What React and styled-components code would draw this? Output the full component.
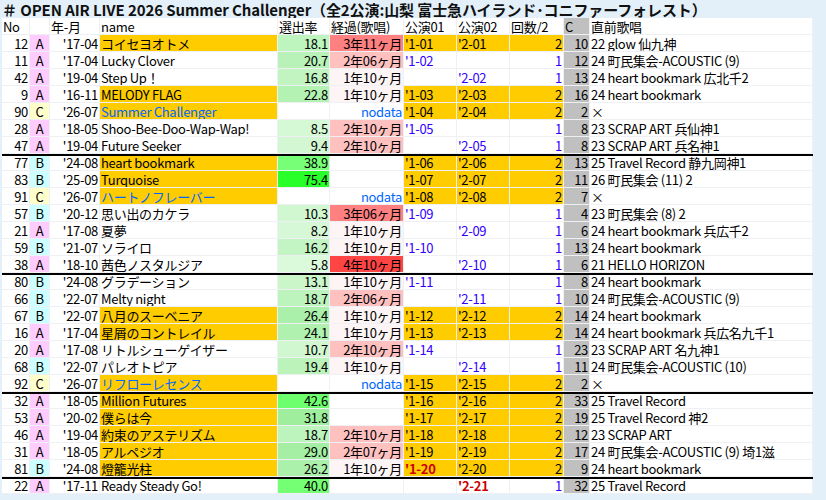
import React from "react";
import styled, { createGlobalStyle } from "styled-components";

const Global = createGlobalStyle`
  html, body { margin: 0; padding: 0; background: #e3f0fa; }
  body { font-family: "Noto Sans CJK JP", "Noto Sans", sans-serif; }
`;

const COLS = "28px 20px 50px 178px 52px 74px 53px 53px 54px 26px 223px";

const Page = styled.div`
  width: 826px; height: 500px; overflow: hidden;
  padding: 1px 0 0 2px; box-sizing: border-box;
`;
const Title = styled.div`
  height: 17px; font-size: 15px; font-weight: bold; line-height: 17px;
  letter-spacing: -0.1px; white-space: nowrap; color: #111; overflow: hidden;
`;
const Table = styled.div`
  width: 811px; background: #fff;
`;
const Row = styled.div`
  display: grid; grid-template-columns: ${COLS};
  height: 17px;
  border-bottom: ${p => (p.$thick ? "2px solid #000" : "0")};
  margin-bottom: ${p => (p.$thick ? "-2px" : "0")};
  position: relative; z-index: ${p => (p.$thick ? 1 : 0)};
`;
const Cell = styled.div`
  font-size: 13px; line-height: 17px; height: 17px;
  white-space: nowrap; overflow: hidden;
  padding: 0 1px; box-sizing: border-box;
  border-right: 1px solid #eef0f3; border-bottom: 1px solid #eef0f3;
  text-align: ${p => p.$align || "left"};
  background: ${p => p.$bg || "transparent"};
  color: ${p => p.$color || "#000"};
  font-weight: ${p => (p.$bold ? "bold" : "normal")};
  letter-spacing: -0.3px;
`;

const gradeBg = { A: "#ffccff", B: "#ccffff", C: "#ffffcc" };
const elBg = { 1: "#fdf5f5", 2: "#ffc0c0", 3: "#ff8080", 4: "#ff4444" };
const ORANGE = "#ffcc00";
const BLUE = "#0066ff";
const PURPLE = "#3300ff";

const rateBg = v => {
  if (v == null) return "#fff";
  const l = Math.max(58, 95 - v * 0.55);
  const s = v > 35 ? 100 : 70;
  return `hsl(120, ${s}%, ${l}%)`;
};

const rows = [
  [12,"A","'17-04","コイセヨオトメ",1,18.1,"3年11ヶ月",3,"'1-01","'2-01",2,10,"22 glow 仙九神"],
  [11,"A","'17-04","Lucky Clover",0,20.7,"2年06ヶ月",2,"'1-02","",1,12,"24 町民集会-ACOUSTIC (9)"],
  [42,"A","'19-04","Step Up！",0,16.8,"1年10ヶ月",1,"","'2-02",1,13,"24 heart bookmark 広北千2"],
  [9,"A","'16-11","MELODY FLAG",1,22.8,"1年10ヶ月",1,"'1-03","'2-03",2,16,"24 heart bookmark"],
  [90,"C","'26-07","Summer Challenger",2,null,"nodata",0,"'1-04","'2-04",2,2,"×"],
  [28,"A","'18-05","Shoo-Bee-Doo-Wap-Wap!",0,8.5,"2年10ヶ月",2,"'1-05","",1,8,"23 SCRAP ART 兵仙神1"],
  [47,"A","'19-04","Future Seeker",0,9.4,"2年10ヶ月",2,"","'2-05",1,8,"23 SCRAP ART 兵名神1",1],
  [77,"B","'24-08","heart bookmark",1,38.9,"",0,"'1-06","'2-06",2,13,"25 Travel Record 静九岡神1"],
  [83,"B","'25-09","Turquoise",1,75.4,"",0,"'1-07","'2-07",2,11,"26 町民集会 (11) 2"],
  [91,"C","'26-07","ハートノフレーバー",2,null,"nodata",0,"'1-08","'2-08",2,7,"×"],
  [57,"B","'20-12","思い出のカケラ",0,10.3,"3年06ヶ月",3,"'1-09","",1,4,"23 町民集会 (8) 2"],
  [21,"A","'17-08","夏夢",0,8.2,"1年10ヶ月",1,"","'2-09",1,6,"24 heart bookmark 兵広千2"],
  [59,"B","'21-07","ソライロ",0,16.2,"1年10ヶ月",1,"'1-10","",1,13,"24 heart bookmark"],
  [38,"A","'18-10","茜色ノスタルジア",0,5.8,"4年10ヶ月",4,"","'2-10",1,6,"21 HELLO HORIZON",1],
  [80,"B","'24-08","グラデーション",0,13.1,"1年10ヶ月",1,"'1-11","",1,8,"24 heart bookmark"],
  [66,"B","'22-07","Melty night",0,18.7,"2年06ヶ月",2,"","'2-11",1,10,"24 町民集会-ACOUSTIC (9)"],
  [67,"B","'22-07","八月のスーベニア",1,26.4,"1年10ヶ月",1,"'1-12","'2-12",2,14,"24 heart bookmark"],
  [16,"A","'17-04","星屑のコントレイル",1,24.1,"1年10ヶ月",1,"'1-13","'2-13",2,14,"24 heart bookmark 兵広名九千1"],
  [20,"A","'17-08","リトルシューゲイザー",0,10.7,"2年10ヶ月",2,"'1-14","",1,23,"23 SCRAP ART 名九神1"],
  [68,"B","'22-07","パレオトピア",0,19.4,"1年10ヶ月",1,"","'2-14",1,11,"24 町民集会-ACOUSTIC (10)"],
  [92,"C","'26-07","リフローレセンス",2,null,"nodata",0,"'1-15","'2-15",2,2,"×",1],
  [32,"A","'18-05","Million Futures",1,42.6,"",0,"'1-16","'2-16",2,33,"25 Travel Record"],
  [53,"A","'20-02","僕らは今",1,31.8,"",0,"'1-17","'2-17",2,19,"25 Travel Record 神2"],
  [46,"A","'19-04","約束のアステリズム",1,18.7,"2年10ヶ月",2,"'1-18","'2-18",2,12,"23 SCRAP ART"],
  [31,"A","'18-05","アルペジオ",1,29.0,"2年07ヶ月",2,"'1-19","'2-19",2,17,"24 町民集会-ACOUSTIC (9) 埼1滋"],
  [81,"B","'24-08","燈籠光柱",1,26.2,"1年10ヶ月",1,"'1-20R","'2-20",2,9,"24 heart bookmark",1],
  [22,"A","'17-11","Ready Steady Go!",0,40.0,"",0,"","'2-21R",1,32,"25 Travel Record"],
];

const PCell = ({ v, full }) => {
  const red = v.endsWith("R");
  const text = red ? v.slice(0, -1) : v;
  return (
    <Cell $bg={full ? ORANGE : "transparent"} $color={red ? "#cc0000" : full ? "#000" : PURPLE} $bold={red}>
      {text}
    </Cell>
  );
};

export default function App() {
  return (
    <Page>
      <Global />
      <Title>＃ OPEN AIR LIVE 2026 Summer Challenger（全2公演:山梨 富士急ハイランド･コニファーフォレスト）</Title>
      <Table>
        <Row>
          <Cell>No</Cell><Cell /><Cell>年-月</Cell><Cell>name</Cell><Cell>選出率</Cell>
          <Cell>経過(歌唱)</Cell><Cell>公演01</Cell><Cell>公演02</Cell><Cell>回数/2</Cell>
          <Cell $bg="#c0c0c0">C</Cell><Cell>直前歌唱</Cell>
        </Row>
        {rows.map((r, i) => {
          const [no, g, ym, name, ns, rate, el, ell, p1, p2, cnt, c, prev, thick] = r;
          const full = cnt === 2;
          return (
            <Row key={i} $thick={!!thick}>
              <Cell $align="right">{no}</Cell>
              <Cell $align="center" $bg={gradeBg[g]}>{g}</Cell>
              <Cell $align="right">{ym}</Cell>
              <Cell $bg={ns ? ORANGE : "transparent"} $color={ns === 2 ? BLUE : "#000"}>{name}</Cell>
              <Cell $align="right" $bg={rateBg(rate)}>{rate == null ? "" : rate.toFixed(1)}</Cell>
              <Cell $align="right" $bg={elBg[ell] || "transparent"} $color={el === "nodata" ? BLUE : "#000"}>{el}</Cell>
              <PCell v={p1} full={full} />
              <PCell v={p2} full={full} />
              <Cell $align="right" $bg={full ? ORANGE : "transparent"} $color={full ? "#000" : PURPLE}>{cnt}</Cell>
              <Cell $align="right" $bg="#c0c0c0">{c}</Cell>
              <Cell>{prev}</Cell>
            </Row>
          );
        })}
      </Table>
    </Page>
  );
}
